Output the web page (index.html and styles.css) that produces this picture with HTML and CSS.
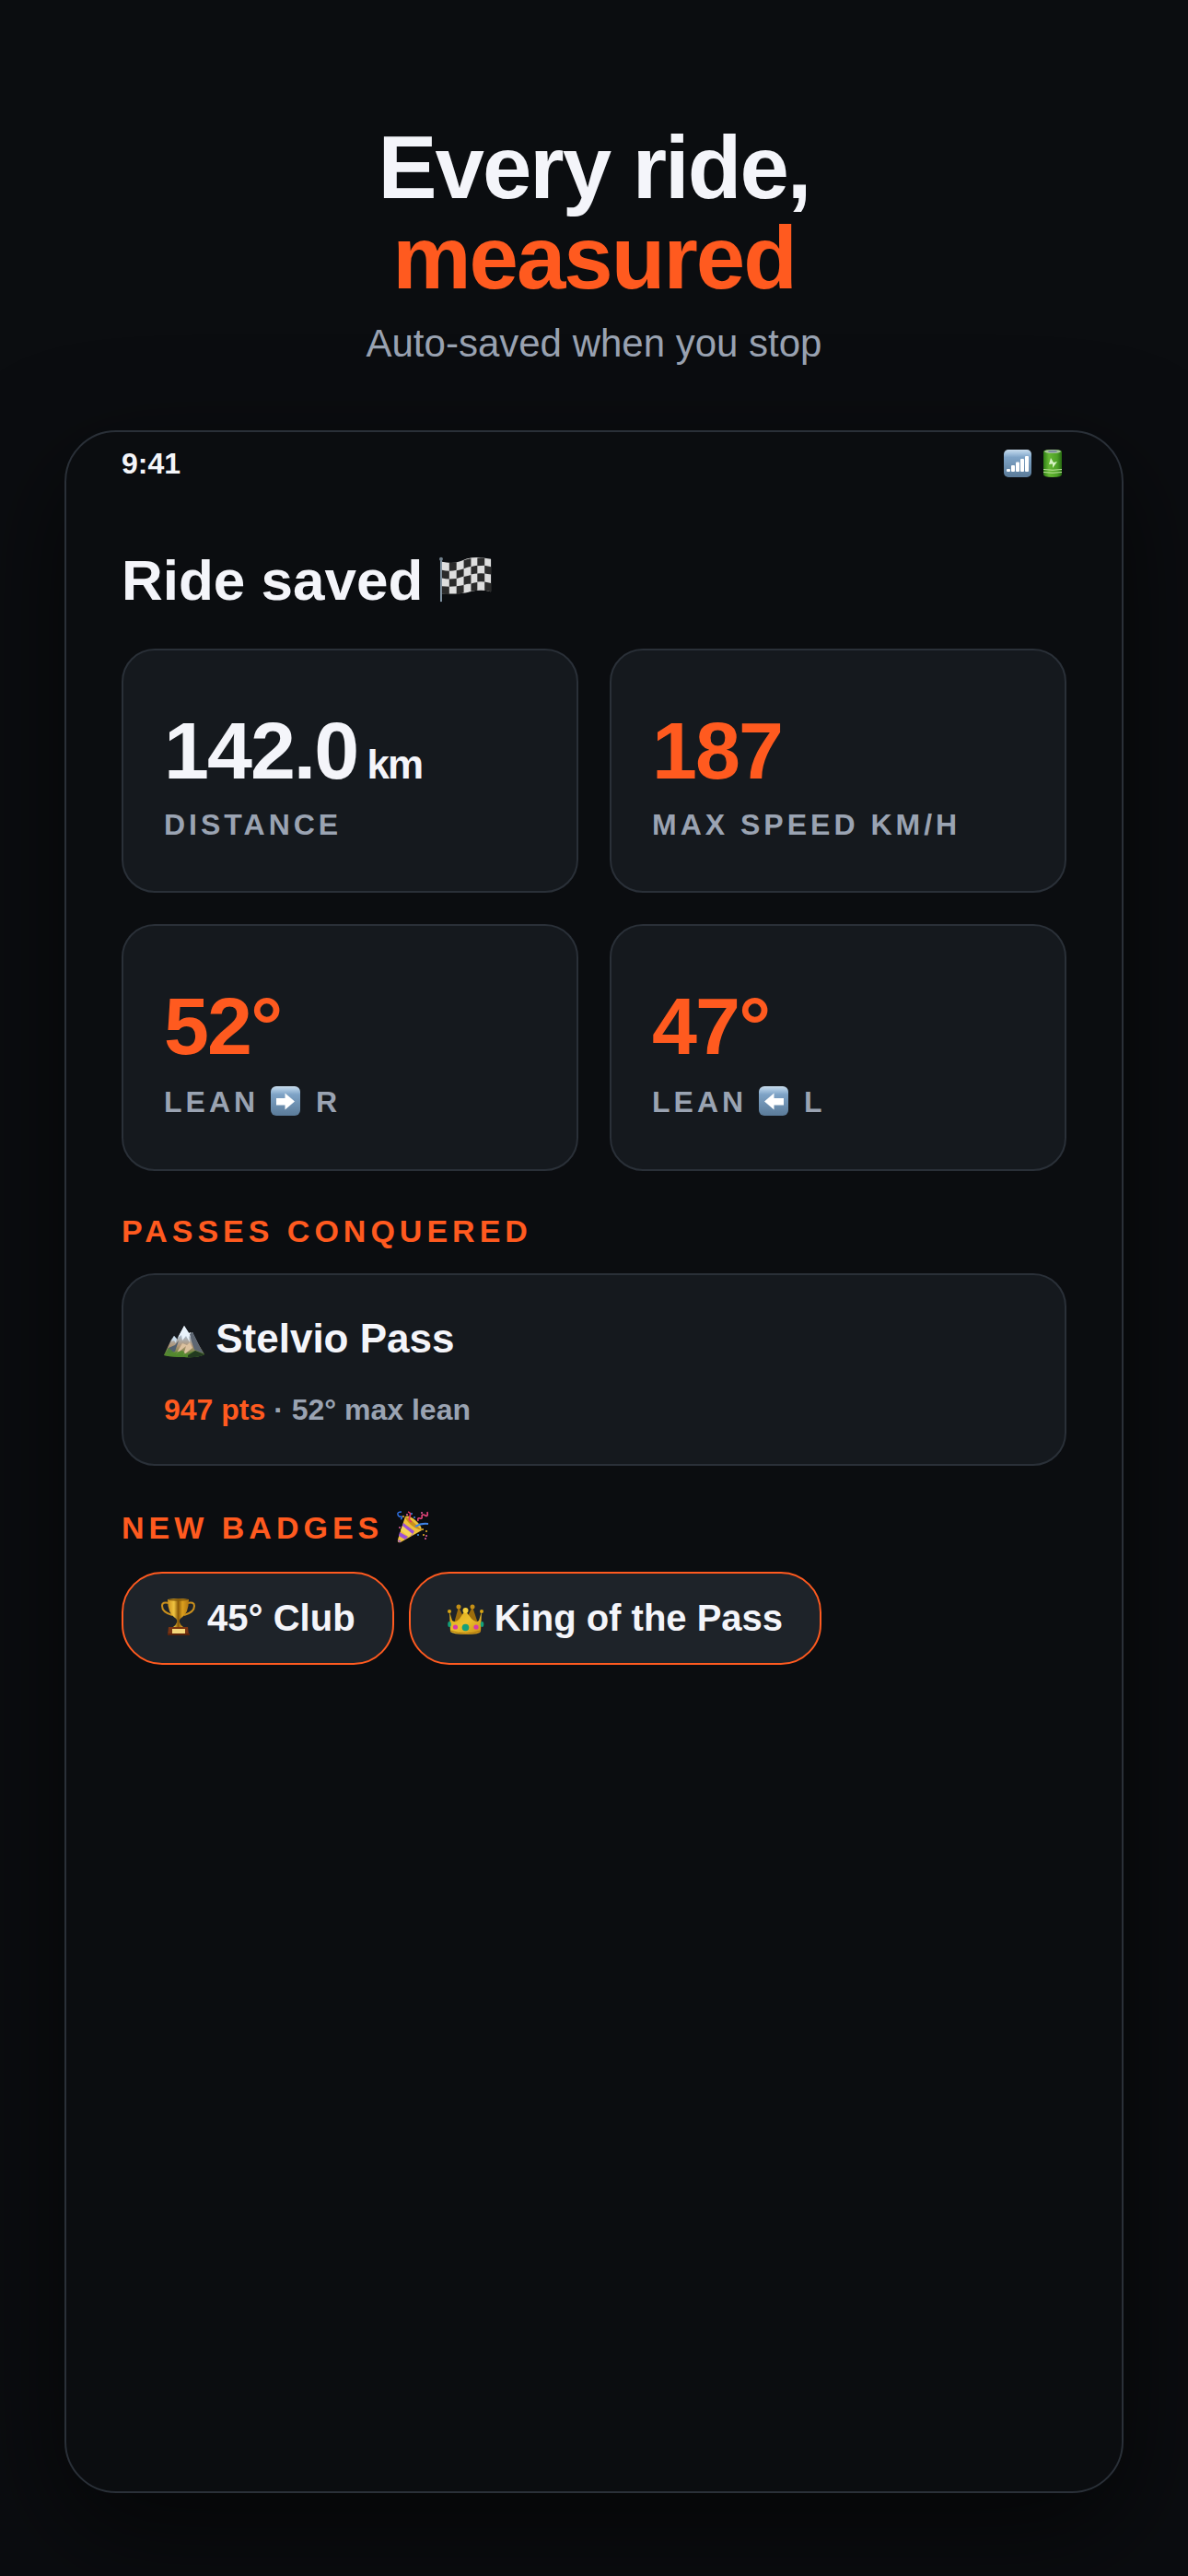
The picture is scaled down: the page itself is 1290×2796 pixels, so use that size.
FILE: index.html
```html
<!DOCTYPE html>
<html lang="en">
<head>
<meta charset="utf-8">
<meta name="viewport" content="width=device-width, initial-scale=1">
<title>Every ride, measured</title>
<link rel="stylesheet" href="styles.css">
</head>
<body>
<svg class="defs" aria-hidden="true">
  <defs>
    <linearGradient id="tile" x1="0" y1="0" x2="0" y2="1">
      <stop offset="0" stop-color="#c9dcec"/>
      <stop offset=".12" stop-color="#a9c6e0"/>
      <stop offset=".28" stop-color="#7ea3c6"/>
      <stop offset="1" stop-color="#5b7b99"/>
    </linearGradient>
    <linearGradient id="gold" x1="0" y1="0" x2="1" y2="0">
      <stop offset="0" stop-color="#c98f1c"/>
      <stop offset=".3" stop-color="#f0c440"/>
      <stop offset=".5" stop-color="#8a5a08"/>
      <stop offset=".7" stop-color="#dba01e"/>
      <stop offset="1" stop-color="#b07410"/>
    </linearGradient>
    <linearGradient id="crown" x1="0" y1="0" x2="1" y2="1">
      <stop offset="0" stop-color="#d9a514"/>
      <stop offset=".5" stop-color="#ebc02e"/>
      <stop offset="1" stop-color="#c98f16"/>
    </linearGradient>
    <linearGradient id="cell" x1="0" y1="0" x2="1" y2="0">
      <stop offset="0" stop-color="#2f7d16"/>
      <stop offset=".3" stop-color="#66b834"/>
      <stop offset=".75" stop-color="#4c9f25"/>
      <stop offset="1" stop-color="#276a12"/>
    </linearGradient>
    <linearGradient id="rock" x1="0" y1="0" x2="0" y2="1">
      <stop offset="0" stop-color="#eaf3fb"/>
      <stop offset=".35" stop-color="#a9b6c4"/>
      <stop offset=".65" stop-color="#b09474"/>
      <stop offset="1" stop-color="#4d7a2a"/>
    </linearGradient>
  </defs>
</svg>

<div class="page">
  <header class="hero">
    <h1 class="hero-title">Every ride,<br><span class="accent">measured</span></h1>
    <p class="hero-sub">Auto-saved when you stop</p>
  </header>

  <main class="phone">
    <div class="status">
      <span>9:41</span>
      <span class="status-icons">
        <svg class="emoji" viewBox="0 0 30 30" role="img" aria-label="Signal">
          <rect width="30" height="30" rx="5" fill="url(#tile)"/>
          <g fill="#fff">
            <rect x="3" y="21" width="4" height="3" rx="1"/>
            <rect x="8" y="17" width="4" height="7" rx="1"/>
            <rect x="13" y="13.500" width="4" height="10.500" rx="1"/>
            <rect x="18" y="10" width="4" height="14" rx="1"/>
            <rect x="23" y="7" width="4" height="17" rx="1"/>
          </g>
        </svg>
        <svg class="emoji" viewBox="0 0 30 30" role="img" aria-label="Battery">
          <path d="M5 2Q5 0 15 0T25 2V27Q25 30 15 30T5 27Z" fill="url(#cell)"/>
          <ellipse cx="15" cy="2" rx="9" ry="2" fill="#a9c79a"/>
          <ellipse cx="15" cy="2" rx="5" ry="1.3" fill="#7d8f9c"/>
          <path d="M5 21.500Q15 23 25 21.500M5 24.500Q15 26 25 24.500" fill="none" stroke="#bfe59f" stroke-width="1"/>
          <path d="M13 9L11 16L15 15.500L15 20L20 13L16 14Z" fill="#d7f2c4"/>
        </svg>
      </span>
    </div>

    <h2 class="title">Ride saved
      <svg class="emoji" viewBox="0 -1 63 63" role="img" aria-label="Chequered flag">
        <rect x="1" y="8" width="2" height="48" fill="#8496a6"/>
        <circle cx="2" cy="9" r="2" fill="#71808c"/>
        <path d="M3 12Q17 15 27 10T57 9V45Q46 42 34 45T3 47Z" fill="#dedede"/>
        <g fill="#2b2b2b">
          <path d="M11 13Q15 13 19 12.500V21Q15 22 11 22ZM27 10.500Q31 9 35 8.500V17Q31 18 27 19.500ZM42 8Q46 7.500 50 8V16Q46 16 42 16.500Z"/>
          <path d="M3 21Q7 22 11 22V31Q7 31 3 30ZM19 21.500Q23 21 27 19.500V28Q23 29.500 19 30.500ZM35 17.500Q39 16.500 42 16V25Q39 25 35 26ZM50 16L57 17.500V26L50 25Z"/>
          <path d="M11 31Q15 31 19 30.500V39Q15 39.500 11 39.500ZM27 28.500Q31 27.500 35 26.500V36Q31 36.500 27 37.500ZM42 25Q46 24.500 50 25V34Q46 33.500 42 34Z"/>
          <path d="M3 39Q7 39.500 11 39.500V48Q7 48 3 47ZM19 39Q23 38.500 27 37.500V46Q23 47.500 19 48ZM35 36Q39 35 42 34.500V43.500Q39 44 35 44.500ZM50 34L57 35.500V45L50 43.500Z"/>
        </g>
      </svg>
    </h2>

    <div class="stats">
      <section class="card stat">
        <p class="value">142.0<span class="unit"> km</span></p>
        <p class="label">DISTANCE</p>
      </section>
      <section class="card stat">
        <p class="value accent">187</p>
        <p class="label">MAX SPEED KM/H</p>
      </section>
      <section class="card stat">
        <p class="value accent">52°</p>
        <p class="label label-icon">LEAN
          <svg class="emoji emoji-spaced" viewBox="0 0 32 32" role="img" aria-label="right">
            <rect width="32" height="32" rx="6" fill="url(#tile)"/>
            <path d="M6 13H15.500V7.500L26 16.500L15.500 25.500V20.500H6Z" fill="#fff"/>
          </svg>
          R</p>
      </section>
      <section class="card stat">
        <p class="value accent">47°</p>
        <p class="label label-icon">LEAN
          <svg class="emoji emoji-spaced" viewBox="0 0 32 32" role="img" aria-label="left">
            <rect width="32" height="32" rx="6" fill="url(#tile)"/>
            <path d="M27 13H16.500V7.500L6 16.500L16.500 25.500V20.500H27Z" fill="#fff"/>
          </svg>
          L</p>
      </section>
    </div>

    <h3 class="section-title">PASSES CONQUERED</h3>
    <section class="card pass">
      <p class="pass-name">
        <svg class="emoji" viewBox="0 0 44 44" role="img" aria-label="Mountain">
          <path d="M0 41L8 24L11 20L14 24L22 9L28 18L31 16L38 30L44 40Q36 44 22 43Q8 43 0 41Z" fill="url(#rock)"/>
          <path d="M22 9L15 22L19 19L20 25L24 20L28 27L27 20L32 24L29 16L27 17Z" fill="#e9f2fb"/>
          <path d="M11 20L8 26L11 25L13 28L14 23Z" fill="#c9dbea"/>
          <path d="M20 28L13 40L24 31L21 41L31 33L28 27L25 30Z" fill="#dcc2a0"/>
          <path d="M28 18L31 16L38 30L43 39L33 35L30 26Z" fill="#5d6672"/>
          <path d="M8 25L5 33L12 30L16 25L12 37L6 39L3 38Z" fill="#51606f"/>
          <path d="M0 41L5 33L11 38L20 36L24 40L34 36L44 40Q36 44 22 43Q8 43 0 41Z" fill="#4f8a2c" opacity=".8"/>
          <path d="M26 41L34 36L44 40Q36 44 26 43Z" fill="#223a20"/>
        </svg>
        Stelvio Pass</p>
      <p class="pass-meta"><span class="accent">947 pts</span> · 52° max lean</p>
    </section>

    <h3 class="section-title section-title-icon">NEW BADGES
      <svg class="emoji" viewBox="0 0 34 34" role="img" aria-label="Party popper">
        <path d="M9 6Q13 4 20 10T27 21L4 34Q0 35 1 31Z" fill="#eec13a"/>
        <path d="M9 6Q15 9 20 14T27 21Q19 19 14 14T9 6Z" fill="#c98f1c"/>
        <path d="M7 13L19 22L16 27L5 19ZM3 23L12 28L9 31L2 27ZM1 31L5 33L2 34Z" fill="#9a4fd6"/>
        <path d="M6 16L17 25L13 28L4 21Z" fill="#f5d458"/>
        <path d="M20 17Q26 13 34 14" fill="none" stroke="#3f83e6" stroke-width="2"/>
        <path d="M5 1Q0 1 1 4T5 6Q6 8 4 9" fill="none" stroke="#2f6fe0" stroke-width="1.500"/>
        <path d="M12 1Q16 2 14 6T16 12" fill="none" stroke="#e0355f" stroke-width="1.800"/>
        <path d="M23 11Q22 7 25 8T27 5Q28 3 31 5T33 1" fill="none" stroke="#e8447a" stroke-width="1.600"/>
        <g fill="#f0b62c"><circle cx="7" cy="6" r="1"/><circle cx="28" cy="20" r="1"/><circle cx="32" cy="22" r="1"/><circle cx="29" cy="26" r="1"/></g>
        <g fill="#e75da0"><circle cx="11" cy="4" r="1"/><circle cx="27" cy="2" r="1"/><circle cx="32" cy="27" r="1"/><circle cx="31" cy="30" r="1"/><circle cx="3" cy="18" r="1"/></g>
        <g fill="#3f83e6"><circle cx="16" cy="3" r="1"/><circle cx="19" cy="7" r="1"/><circle cx="23" cy="26" r="1"/></g>
      </svg>
    </h3>
    <ul class="badges">
      <li class="badge">
        <svg class="emoji" viewBox="0 0 40 40" role="img" aria-label="Trophy">
          <path d="M10 5Q2 3 2 8Q2 15 13 18M29 5Q37 3 37 8Q37 15 26 18" fill="none" stroke="#c98f1c" stroke-width="2"/>
          <path d="M8 1Q20 -1 31 1Q31 16 23 21Q20 23 21 26Q22 29 25 31H14Q17 29 18 26Q19 23 16 21Q8 16 8 1Z" fill="url(#gold)"/>
          <ellipse cx="19.500" cy="1.500" rx="11" ry="1.200" fill="#8a5f0c"/>
          <path d="M9 31H30L31 40H8Z" fill="#7a3412"/>
          <rect x="13" y="33" width="14" height="5" fill="#f5d77a"/>
          <rect x="8" y="38" width="24" height="2" fill="#5a220b"/>
        </svg>
        45° Club</li>
      <li class="badge">
        <svg class="emoji" viewBox="0 0 40 40" role="img" aria-label="Crown">
          <path d="M7 27L12 9L19 24L27 9L33 27Z" fill="#9c6c0c"/>
          <circle cx="12" cy="9" r="2.500" fill="#c48f16"/>
          <circle cx="27" cy="9" r="2.500" fill="#c48f16"/>
          <path d="M2 14L5 24Q9 27 13 22L19 13L26 22Q31 27 34 24L37 14L36 36Q34 39 20 39T3 36Z" fill="url(#crown)"/>
          <circle cx="2" cy="14" r="2" fill="#d9a514"/>
          <circle cx="19.500" cy="13" r="3" fill="#f3cf3c"/>
          <circle cx="37" cy="14" r="2" fill="#d9a514"/>
          <path d="M3 35Q20 41 36 35" fill="none" stroke="#a8740f" stroke-width="1"/>
          <circle cx="19.500" cy="31.500" r="3.800" fill="#12a07a"/>
          <circle cx="8.500" cy="31" r="2.600" fill="#d83aa8"/>
          <circle cx="31" cy="31" r="2.600" fill="#d83aa8"/>
          <ellipse cx="2" cy="28" rx="1.800" ry="3" fill="#12a07a"/>
          <ellipse cx="37.500" cy="28" rx="1.800" ry="3" fill="#12a07a"/>
        </svg>
        King of the Pass</li>
    </ul>
  </main>
</div>
</body>
</html>
```
FILE: styles.css
```css
:root {
  --bg: #0b0d10;
  --card: #15191e;
  --chip: #1e2329;
  --line: #2a3038;
  --text: #f4f5fa;
  --muted: #9aa3b2;
  --accent: #ff5a1f;
}

* {
  box-sizing: border-box;
  margin: 0;
  padding: 0;
}

body {
  background: var(--bg);
  color: var(--text);
  font-family: "Helvetica Neue", "Liberation Sans", Arial, sans-serif;
  font-weight: 700;
}

.defs {
  position: absolute;
  width: 0;
  height: 0;
}

.accent {
  color: var(--accent);
}

.emoji {
  width: 1em;
  height: 1em;
  vertical-align: -0.125em;
  overflow: visible;
}

.emoji-spaced {
  margin-right: 4px;
}

.page {
  display: flex;
  flex-direction: column;
  min-height: 100vh;
  padding: 133px 70px 90px;
  overflow: hidden;
}

.hero {
  text-align: center;
}

.hero-title {
  font-size: 96px;
  line-height: 98px;
  letter-spacing: -2px;
}

.hero-sub {
  margin-top: 20px;
  color: var(--muted);
  font-size: 42px;
  font-weight: 500;
  line-height: 48px;
}

.phone {
  flex: 1;
  margin-top: 70px;
  padding: 14px 60px 60px;
  border: 2px solid var(--line);
  border-radius: 56px;
  background: var(--bg);
  box-shadow: 0 40px 120px rgba(0, 0, 0, 0.6);
}

.status {
  display: flex;
  align-items: center;
  justify-content: space-between;
  font-size: 32px;
  line-height: 40px;
}

.status-icons {
  display: flex;
  gap: 8px;
  font-size: 30px;
}

.title {
  margin: 72px 0 39px;
  font-size: 62px;
  line-height: 70px;
}

.stats {
  display: grid;
  grid-template-columns: 1fr 1fr;
  gap: 34px;
}

.card {
  border: 2px solid var(--line);
  border-radius: 36px;
  background: var(--card);
}

.stat {
  padding: 60px 44px 53px;
}

.value {
  font-size: 88px;
  line-height: 98px;
  letter-spacing: -2px;
}

.unit {
  font-size: 44px;
  line-height: 44px;
}

.label {
  margin-top: 13px;
  color: var(--muted);
  font-size: 32px;
  line-height: 37px;
  letter-spacing: 4px;
}

.label-icon {
  line-height: 40px;
}

.section-title {
  margin: 45px 0 26px;
  color: var(--accent);
  font-size: 34px;
  line-height: 40px;
  letter-spacing: 5px;
}

.section-title-icon {
  line-height: 44px;
}

.pass {
  padding: 44px 44px 41px;
}

.pass-name {
  font-size: 44px;
  line-height: 50px;
}

.pass-meta {
  margin-top: 34px;
  color: var(--muted);
  font-size: 32px;
  line-height: 36px;
}

.badges {
  display: flex;
  flex-wrap: wrap;
  gap: 16px;
  list-style: none;
}

.badge {
  padding: 25px 40px;
  border: 2px solid var(--accent);
  border-radius: 44px;
  background: var(--chip);
  font-size: 40px;
  line-height: 47px;
}
```
